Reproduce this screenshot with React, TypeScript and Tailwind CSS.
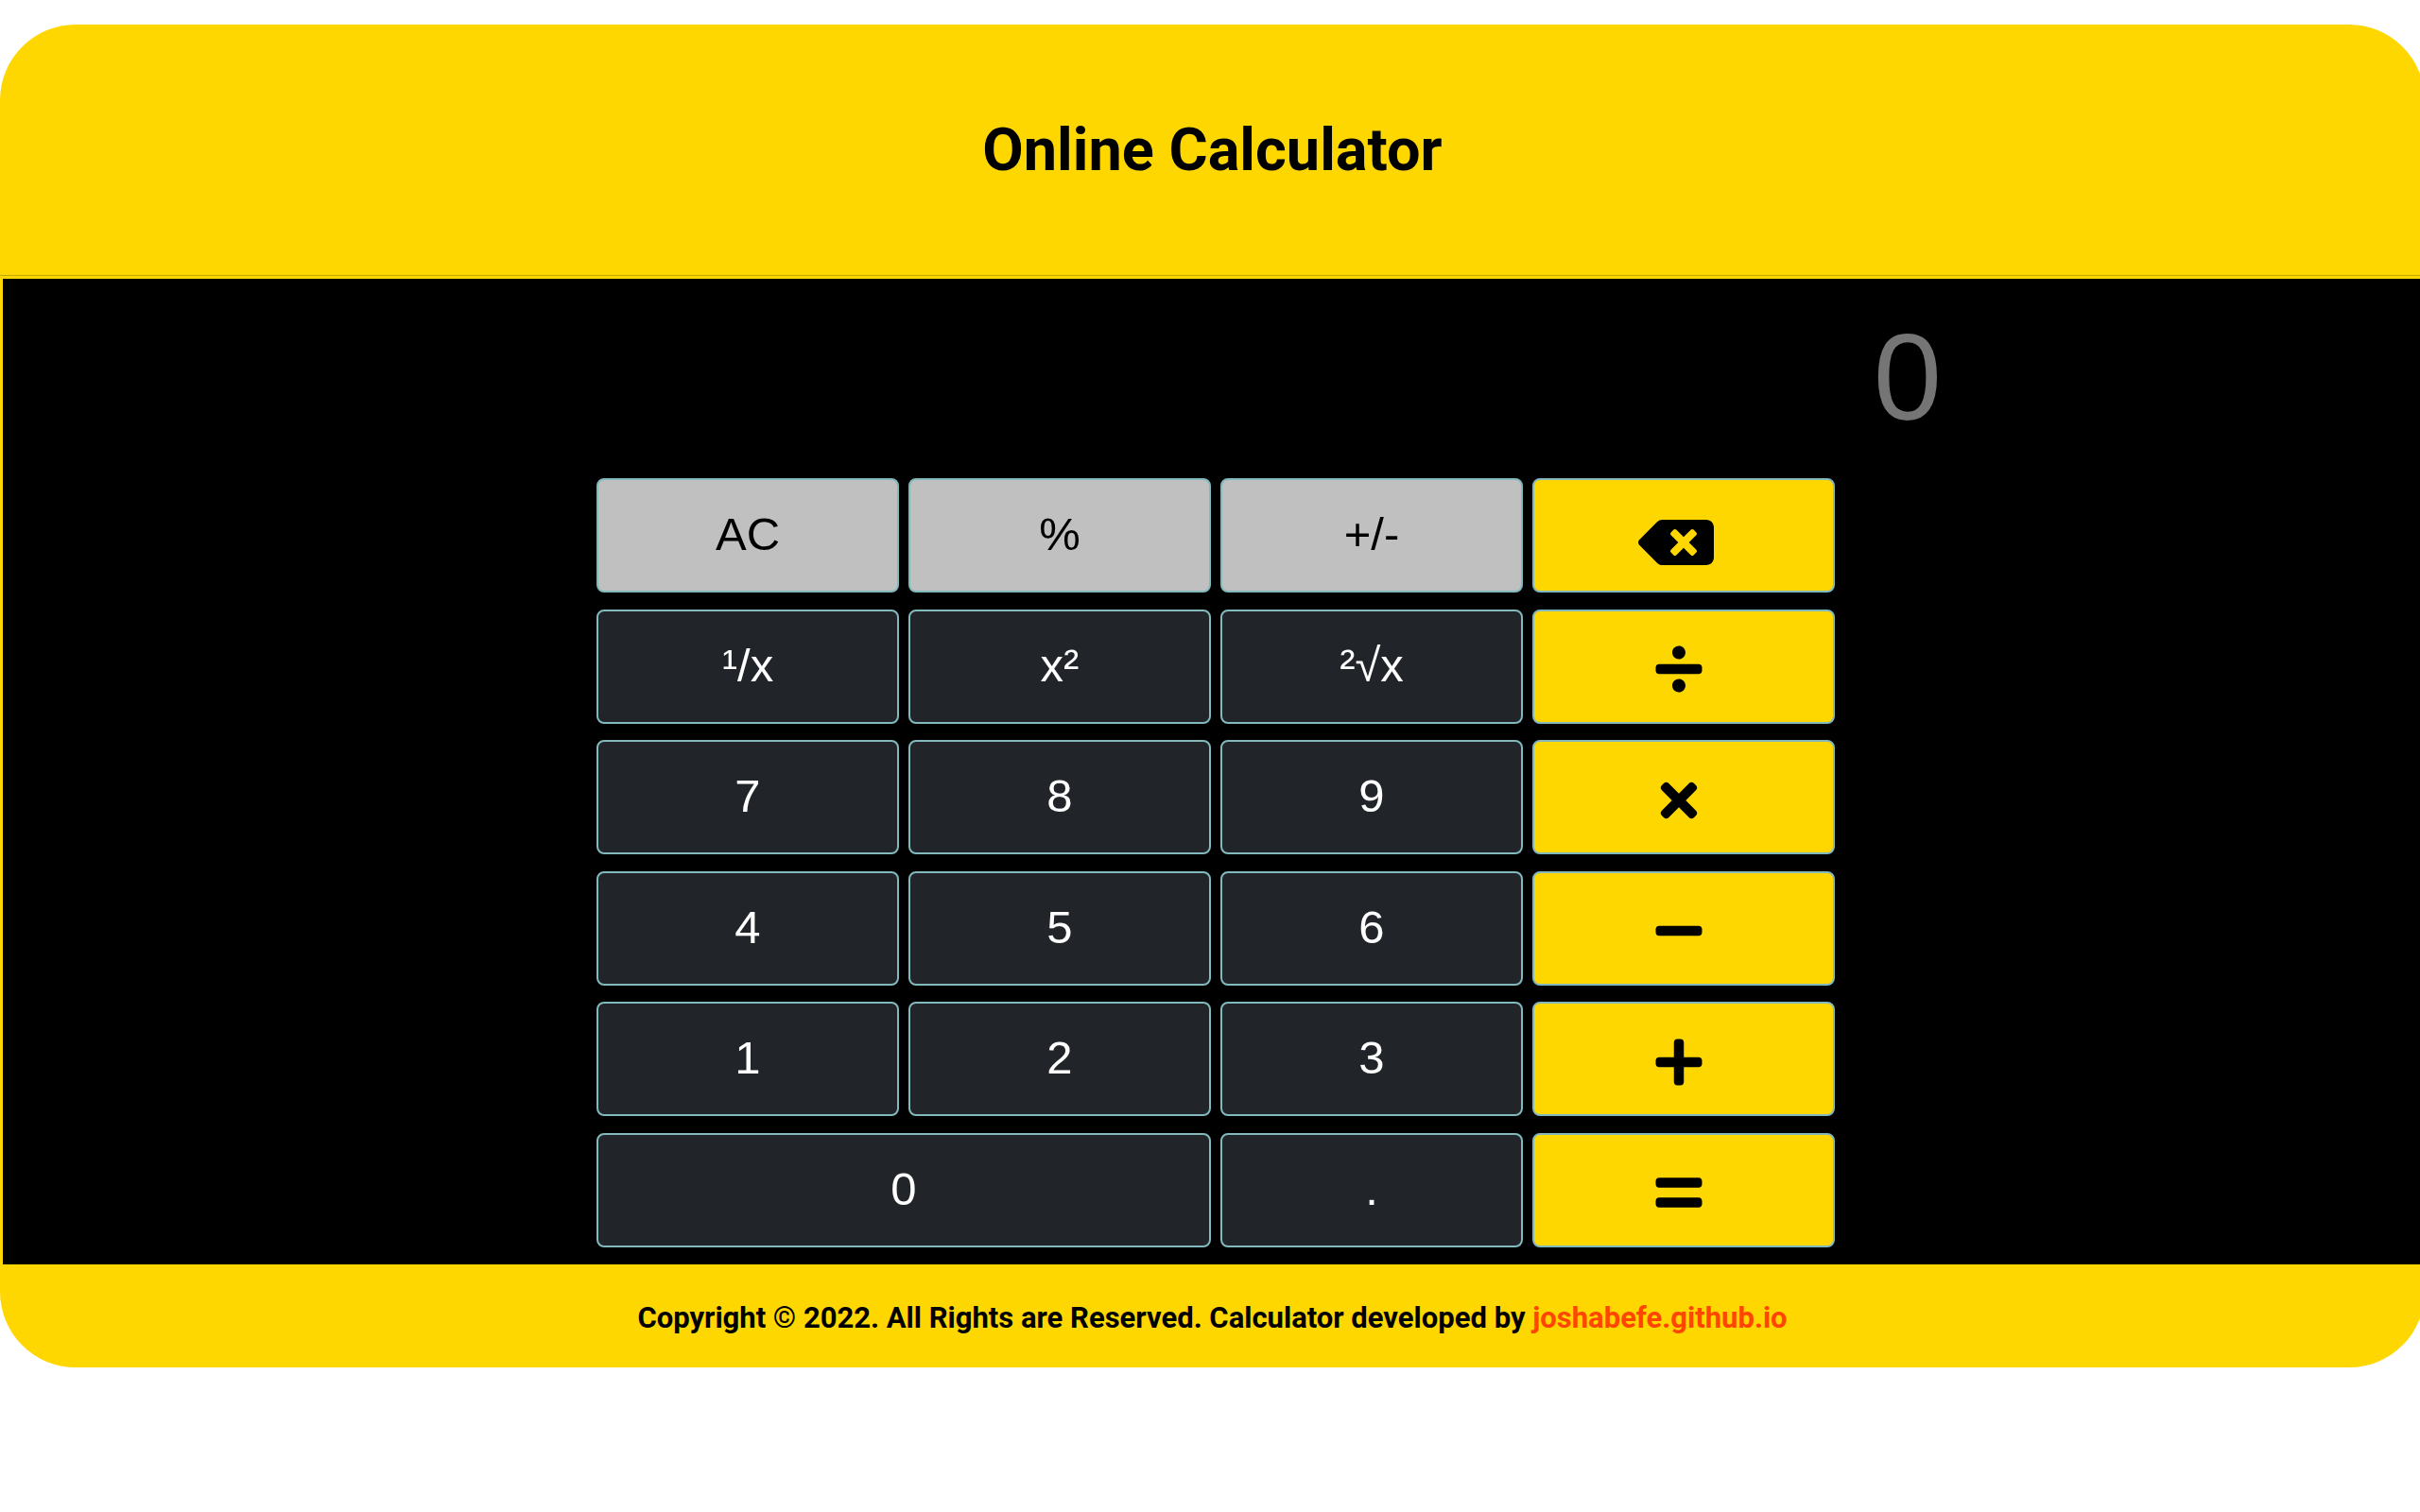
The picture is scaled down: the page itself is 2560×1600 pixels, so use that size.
import type { ReactNode } from "react";
import { FaBackspace, FaDivide, FaEquals, FaMinus, FaPlus, FaTimes } from "react-icons/fa";

type Kind = "light" | "dark" | "gold";

const kinds: Record<Kind, string> = {
  light: "bg-[#c0c0c0] text-black pb-0.5",
  dark: "bg-[#212529] text-white pb-0.5",
  gold: "bg-[#ffd700] text-black pr-2.5 pt-1.5",
};

function Key({ kind, label, wide, children }: { kind: Kind; label: string; wide?: boolean; children?: ReactNode }) {
  return (
    <button
      type="button"
      aria-label={label}
      className={`flex h-[121px] items-center justify-center rounded-lg border-2 border-[#82b9bd] text-[49px] leading-none ${kinds[kind]} ${wide ? "col-span-2" : ""}`}
    >
      {children ?? label}
    </button>
  );
}

export default function App() {
  return (
    <main className="min-h-screen overflow-hidden bg-white pt-[26px] font-['Liberation_Sans',Arial,sans-serif] text-black">
      <div className="-mr-[5px] overflow-hidden rounded-[80px] bg-[#ffd700]">
        <header className="flex h-[266px] items-center justify-center border-b border-[#c7a800]">
          <h1 className="font-['Roboto',sans-serif] text-[63px] leading-none font-bold">Online Calculator</h1>
        </header>

        <section className="mt-[3px] ml-[3px] bg-black pt-[17px] pb-[18px] pl-1" aria-label="Calculator">
          <div className="mx-auto w-[1310px]">
            <input
              type="text"
              readOnly
              placeholder="0"
              aria-label="Result"
              className="ml-[113px] block h-[194px] w-[1310px] bg-black pb-5 text-right text-[130px] text-white outline-none placeholder:text-[#757575]"
            />
            <div className="grid h-[814px] grid-cols-4 content-between gap-x-2.5">
              <Key kind="light" label="AC" />
              <Key kind="light" label="%" />
              <Key kind="light" label="+/-" />
              <Key kind="gold" label="Backspace"><FaBackspace className="mt-2 mr-1.5 size-16 w-20" /></Key>
              <Key kind="dark" label="¹/x" />
              <Key kind="dark" label="x²" />
              <Key kind="dark" label="²√x" />
              <Key kind="gold" label="Divide"><FaDivide className="size-14" /></Key>
              <Key kind="dark" label="7" />
              <Key kind="dark" label="8" />
              <Key kind="dark" label="9" />
              <Key kind="gold" label="Multiply"><FaTimes className="size-14" /></Key>
              <Key kind="dark" label="4" />
              <Key kind="dark" label="5" />
              <Key kind="dark" label="6" />
              <Key kind="gold" label="Subtract"><FaMinus className="size-14" /></Key>
              <Key kind="dark" label="1" />
              <Key kind="dark" label="2" />
              <Key kind="dark" label="3" />
              <Key kind="gold" label="Add"><FaPlus className="size-14" /></Key>
              <Key kind="dark" label="0" wide />
              <Key kind="dark" label="." />
              <Key kind="gold" label="Equals"><FaEquals className="size-14" /></Key>
            </div>
          </div>
        </section>

        <footer className="flex h-[109px] items-center justify-center">
          <p className="pt-1 font-['Roboto',sans-serif] text-[31px] leading-none font-bold">
            Copyright © 2022. All Rights are Reserved. Calculator developed by{" "}
            <a href="https://joshabefe.github.io" className="text-[#ff4500]">joshabefe.github.io</a>
          </p>
        </footer>
      </div>
    </main>
  );
}
